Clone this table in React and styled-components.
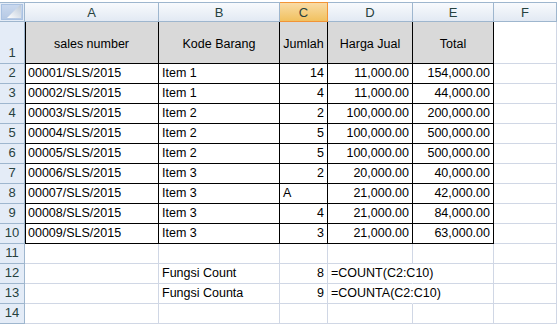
import styled, { createGlobalStyle } from 'styled-components';

const GlobalStyle = createGlobalStyle`
	html, body {
		margin: 0;
		padding: 0;
		background: #ffffff;
	}
	body {
		font-family: 'Liberation Sans', Arial, sans-serif;
	}
`;

const COLS = ['A', 'B', 'C', 'D', 'E', 'F'];

const DATA = [
	['00001/SLS/2015', 'Item 1', '14', '11,000.00', '154,000.00'],
	['00002/SLS/2015', 'Item 1', '4', '11,000.00', '44,000.00'],
	['00003/SLS/2015', 'Item 2', '2', '100,000.00', '200,000.00'],
	['00004/SLS/2015', 'Item 2', '5', '100,000.00', '500,000.00'],
	['00005/SLS/2015', 'Item 2', '5', '100,000.00', '500,000.00'],
	['00006/SLS/2015', 'Item 3', '2', '20,000.00', '40,000.00'],
	['00007/SLS/2015', 'Item 3', 'A', '21,000.00', '42,000.00'],
	['00008/SLS/2015', 'Item 3', '4', '21,000.00', '84,000.00'],
	['00009/SLS/2015', 'Item 3', '3', '21,000.00', '63,000.00'],
];

const App = () => {
	return (
		<>
			<GlobalStyle />
			<Sheet>
				<Grid>
					<Corner>
						<CornerBox>
							<svg width="14" height="14" viewBox="0 0 14 14">
								<defs>
									<linearGradient id="tri" x1="0" y1="1" x2="1" y2="0">
										<stop offset="0" stopColor="#ffffff" />
										<stop offset="1" stopColor="#b9c6d6" />
									</linearGradient>
								</defs>
								<polygon points="14,0 14,14 0,14" fill="url(#tri)" />
							</svg>
						</CornerBox>
					</Corner>
					{COLS.map((c) => (
						<ColHead key={c} $active={c === 'C'}>{c}</ColHead>
					))}

					<RowHead>1</RowHead>
					<TitleCell $first>sales number</TitleCell>
					<TitleCell>Kode Barang</TitleCell>
					<TitleCell>Jumlah</TitleCell>
					<TitleCell>Harga Jual</TitleCell>
					<TitleCell>Total</TitleCell>
					<Cell />

					{DATA.map((r, i) => (
						<Row key={i}>
							<RowHead>{i + 2}</RowHead>
							<Cell $table $first>{r[0]}</Cell>
							<Cell $table>{r[1]}</Cell>
							<Cell $table $right={r[2] !== 'A'}>{r[2]}</Cell>
							<Cell $table $right>{r[3]}</Cell>
							<Cell $table $right>{r[4]}</Cell>
							<Cell />
						</Row>
					))}

					<RowHead>11</RowHead>
					<Cell /><Cell /><Cell /><Cell /><Cell /><Cell />

					<RowHead>12</RowHead>
					<Cell />
					<Cell>Fungsi Count</Cell>
					<Cell $right>8</Cell>
					<Cell $spill>=COUNT(C2:C10)</Cell>
					<Cell /><Cell />

					<RowHead>13</RowHead>
					<Cell />
					<Cell>Fungsi Counta</Cell>
					<Cell $right>9</Cell>
					<Cell $spill>=COUNTA(C2:C10)</Cell>
					<Cell /><Cell />

					<RowHead>14</RowHead>
					<Cell /><Cell /><Cell /><Cell /><Cell /><Cell />
				</Grid>
			</Sheet>
		</>
	);
};

const Row = ({ children }) => <>{children}</>;

export default App;

// CSS
const Sheet = styled.div`
	width: 559px;
	height: 326px;
	overflow: hidden;
	padding-top: 2px;
	box-sizing: border-box;
	background: #ffffff;
`;

const Grid = styled.div`
	display: grid;
	grid-template-columns: 25px 134px 121px 48px 85px 81px 63px;
	grid-template-rows: 20px 42px repeat(13, 20px);
	font-size: 12.5px;
	color: #000;
`;

const Corner = styled.div`
	box-sizing: border-box;
	border-top: 1px solid #9eb6ce;
	border-bottom: 1px solid #9eb6ce;
	border-right: 1px solid #9eb6ce;
	background: #e4ecf7;
	padding: 1px;
`;

const CornerBox = styled.div`
	height: 100%;
	box-sizing: border-box;
	background: linear-gradient(#c9d8ee, #b6c9e4);
	border: 1px solid #a9c1e1;
	display: flex;
	align-items: flex-end;
	justify-content: flex-end;
	padding: 1px;
`;

const ColHead = styled.div`
	box-sizing: border-box;
	border-top: 1px solid ${(p) => (p.$active ? '#f29436' : '#9eb6ce')};
	border-bottom: 1px solid ${(p) => (p.$active ? '#f29436' : '#9eb6ce')};
	border-right: 1px solid ${(p) => (p.$active ? '#f29436' : '#9eb6ce')};
	background: ${(p) =>
		p.$active
			? 'linear-gradient(#f9dba5, #f1c15f)'
			: 'linear-gradient(#f8fafd, #e2e9f3)'};
	color: #27413e;
	display: flex;
	align-items: center;
	justify-content: center;
	font-size: 13px;
`;

const RowHead = styled.div`
	box-sizing: border-box;
	border-right: 1px solid #9eb6ce;
	border-bottom: 1px solid #9eb6ce;
	background: #e4ecf7;
	color: #27413e;
	display: flex;
	align-items: flex-end;
	justify-content: center;
	padding-bottom: 2px;
	font-size: 13px;
	line-height: 16px;
`;

const Cell = styled.div`
	box-sizing: border-box;
	border-right: 1px solid ${(p) => (p.$spill ? 'transparent' : p.$table ? '#000' : '#d0d7e5')};
	border-bottom: 1px solid ${(p) => (p.$table ? '#000' : '#d0d7e5')};
	box-shadow: ${(p) => (p.$first ? 'inset 1px 0 0 #000' : 'none')};
	display: flex;
	align-items: flex-end;
	justify-content: ${(p) => (p.$right ? 'flex-end' : 'flex-start')};
	padding: 0 3px 2px 3px;
	line-height: 16px;
	white-space: nowrap;
	overflow: visible;
	position: relative;
	z-index: ${(p) => (p.$spill ? 1 : 0)};
`;

const TitleCell = styled.div`
	box-sizing: border-box;
	border-right: 1px solid #000;
	border-bottom: 1px solid #000;
	box-shadow: ${(p) => (p.$first ? 'inset 1px 0 0 #000' : 'none')};
	background: #d9d9d9;
	display: flex;
	align-items: center;
	justify-content: center;
	white-space: nowrap;
	padding-top: 2px;
`;
